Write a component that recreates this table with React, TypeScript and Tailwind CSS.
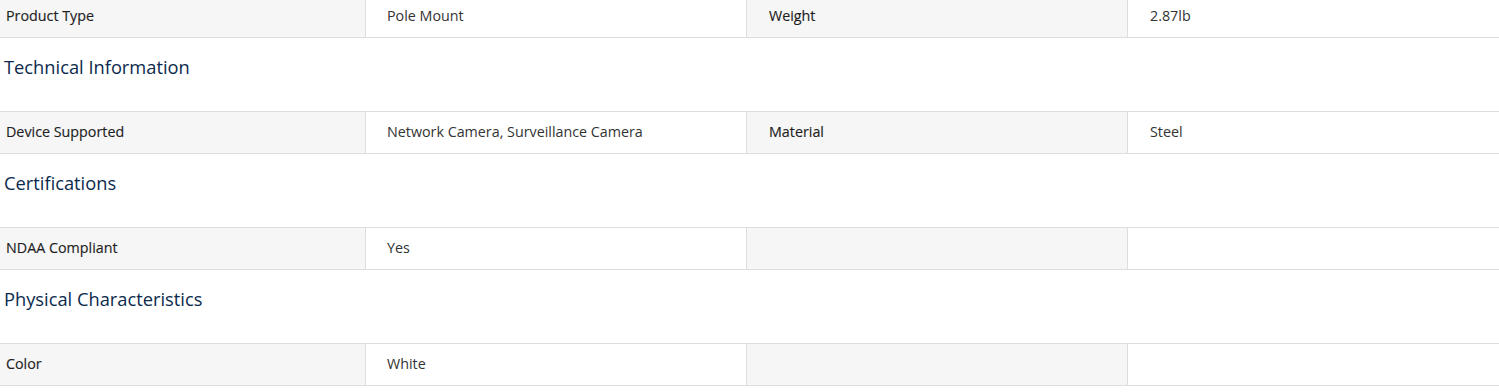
import React from "react";

type Row = [string, string, string, string];

const sections: { title?: string; rows: Row[] }[] = [
  { rows: [["Product Type", "Pole Mount", "Weight", "2.87lb"]] },
  {
    title: "Technical Information",
    rows: [["Device Supported", "Network Camera, Surveillance Camera", "Material", "Steel"]],
  },
  { title: "Certifications", rows: [["NDAA Compliant", "Yes", "", ""]] },
  { title: "Physical Characteristics", rows: [["Color", "White", "", ""]] },
];

const label =
  "bg-[#f6f6f6] border-r border-[#dedede] pb-[2px] flex items-center text-[#1e1e1e] [-webkit-text-stroke:0.15px_#1e1e1e]";

function SpecRow({ row }: { row: Row }) {
  return (
    <div className="grid grid-cols-[366px_381px_381px_1fr] border-y border-[#dedede] h-[43px] text-[14.3px] leading-[20px]">
      <div className={`${label} pl-[6px]`}>{row[0]}</div>
      <div className="border-r border-[#dedede] pl-[21px] pb-[2px] flex items-center text-[#333]">{row[1]}</div>
      <div className={`${label} pl-[22px]`}>{row[2]}</div>
      <div className="pl-[22px] pb-[2px] flex items-center text-[#333]">{row[3]}</div>
    </div>
  );
}

export default function App() {
  return (
    <div
      className="w-[1499px] bg-white mt-[-5px]"
      style={{ fontFamily: "'Open Sans', 'Lato', sans-serif" }}
    >
      {sections.map((s, i) => (
        <div key={i}>
          {s.title && (
            <h3 className="pl-[4px] pt-[15px] pb-[31px] text-[18.3px] leading-[27px] font-medium text-[#0b2a4d]">
              {s.title}
            </h3>
          )}
          {s.rows.map((r, j) => (
            <SpecRow key={j} row={r} />
          ))}
        </div>
      ))}
    </div>
  );
}
